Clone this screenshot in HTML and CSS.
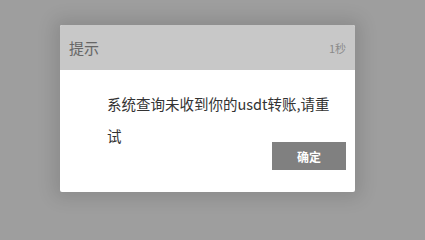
FILE: index.html
```html
<!DOCTYPE html>
<html lang="zh">
<head>
<meta charset="utf-8">
<link rel="stylesheet" href="styles.css">
</head>
<body>
<div class="dialog">
  <div class="dialog-header">
    <span class="dialog-title">提示</span>
    <span class="dialog-timer">1秒</span>
  </div>
  <div class="dialog-body">
    <p class="dialog-message">系统查询未收到你的usdt转账,请重试</p>
  </div>
  <div class="dialog-footer">
    <button class="dialog-btn">确定</button>
  </div>
</div>
</body>
</html>
```
FILE: styles.css
```css
html, body {
  margin: 0;
  padding: 0;
  height: 100%;
}
body {
  background: #9e9e9e;
  font-family: "Noto Sans CJK SC", "Noto Sans", sans-serif;
  padding-top: 25px;
  padding-left: 60px;
  box-sizing: border-box;
}
.dialog {
  width: 295px;
  height: 167px;
  background: #ffffff;
  border-radius: 2px;
  box-shadow: 0 0 18px 6px rgba(0, 0, 0, 0.12);
  overflow: hidden;
  display: flex;
  flex-direction: column;
}
.dialog-header {
  height: 45px;
  background: #c8c8c8;
  display: flex;
  align-items: center;
  justify-content: space-between;
  padding: 0 9px 0 9px;
  box-sizing: border-box;
}
.dialog-title {
  font-size: 15px;
  color: #666666;
}
.dialog-timer {
  font-size: 11px;
  color: #8a8a8a;
}
.dialog-body {
  padding: 18px 0 0 47px;
}
.dialog-message {
  margin: 0;
  width: 232px;
  font-size: 14.5px;
  line-height: 32px;
  color: #333333;
}
.dialog-footer {
  display: flex;
  justify-content: flex-end;
  padding-right: 9px;
  margin-top: -10px;
}
.dialog-btn {
  width: 74px;
  height: 28px;
  border: none;
  background: #808080;
  color: #ffffff;
  font-family: "Noto Sans CJK SC", "Noto Sans", sans-serif;
  font-size: 12px;
  font-weight: bold;
  padding: 0;
}
```
